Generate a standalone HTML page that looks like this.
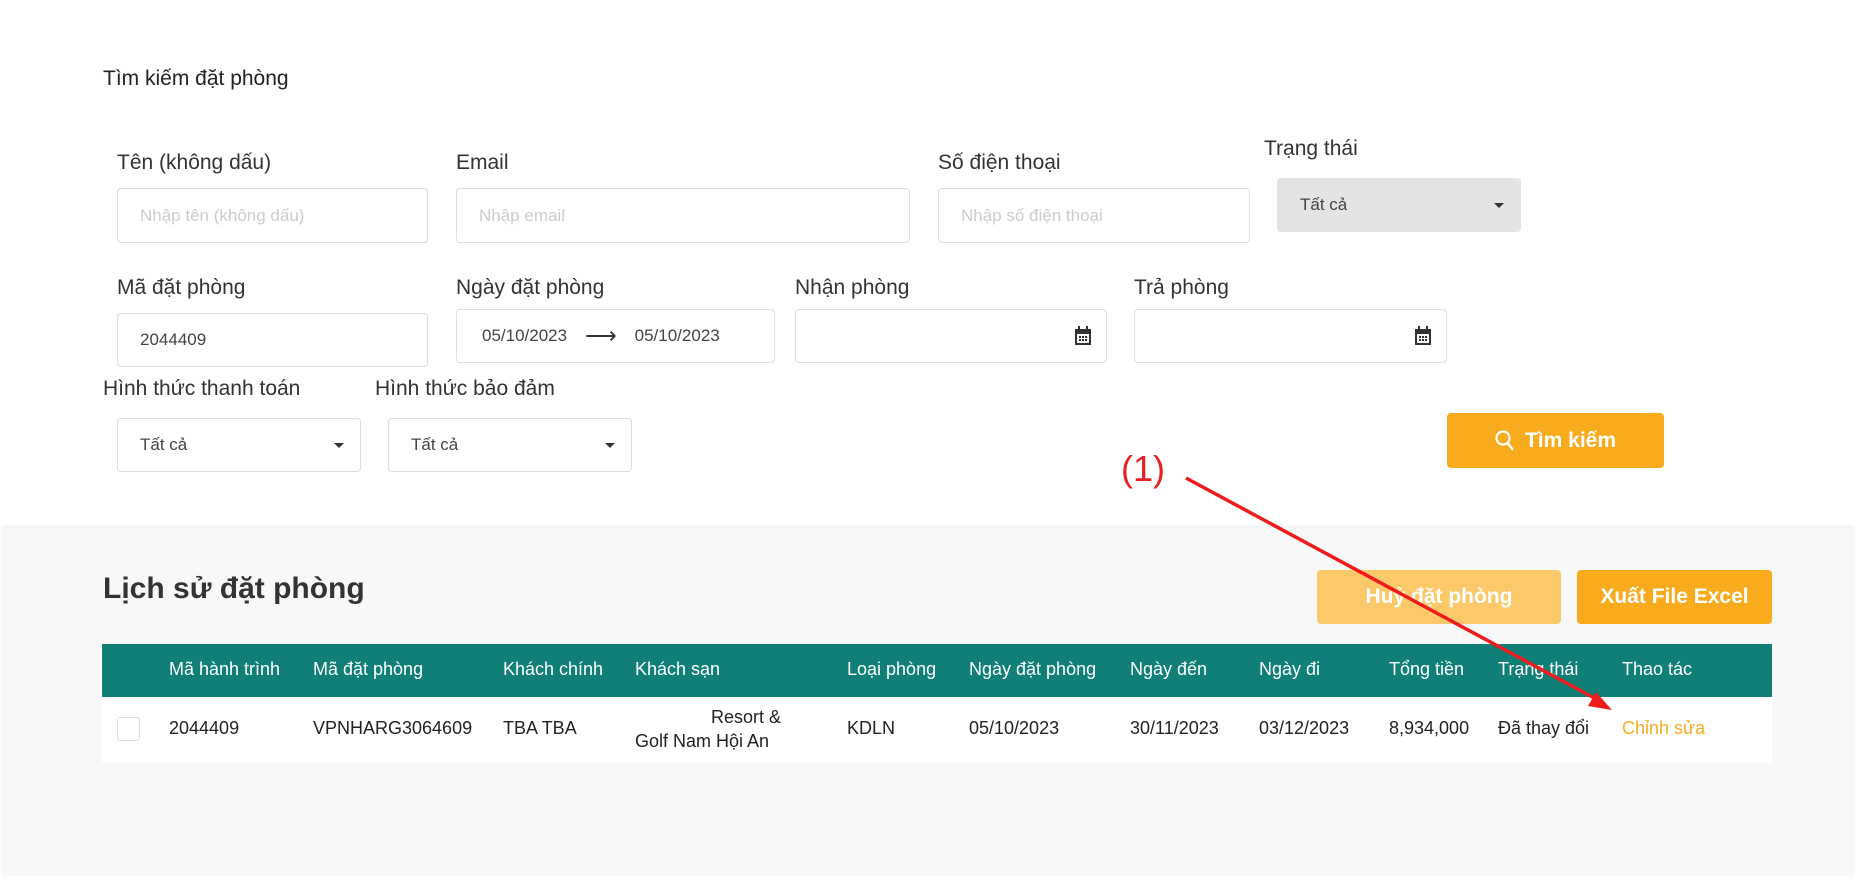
<!DOCTYPE html>
<html><head><meta charset="utf-8"><style>
*{box-sizing:border-box;margin:0;padding:0}
body{width:1856px;height:876px;background:#fff;font-family:"Liberation Sans",sans-serif;color:#333;position:relative;overflow:hidden}
.a{position:absolute;white-space:nowrap}
.lbl{font-size:21px;color:#333}
.inp{position:absolute;border:1px solid #ddd;border-radius:4px;background:#fff;font-size:17px;color:#ccc;padding-left:22px;display:flex;align-items:center}
.sel{color:#444}
.caret{position:absolute;right:16px;top:50%;margin-top:-2px;border-left:5px solid transparent;border-right:5px solid transparent;border-top:5px solid #333}
.bottom{position:absolute;left:2px;right:2px;top:528px;height:348px;background:#f8f8f8;box-shadow:0 -2px 4px rgba(0,0,0,.06)}
.th{font-size:18px;color:#fff;top:659px}
.td{font-size:18px;color:#222;top:718px}
.cal{position:absolute;right:14px;top:50%;margin-top:-10px}
</style></head><body>
<div class="a" style="left:103px;top:67px;font-size:21px;color:#222">Tìm kiếm đặt phòng</div>

<div class="a lbl" style="left:117px;top:151px">Tên (không dấu)</div>
<div class="inp" style="left:117px;top:188px;width:311px;height:55px">Nhập tên (không dấu)</div>
<div class="a lbl" style="left:456px;top:151px">Email</div>
<div class="inp" style="left:456px;top:188px;width:454px;height:55px">Nhập email</div>
<div class="a lbl" style="left:938px;top:151px">Số điện thoại</div>
<div class="inp" style="left:938px;top:188px;width:312px;height:55px">Nhập số điện thoại</div>
<div class="a lbl" style="left:1264px;top:137px">Trạng thái</div>
<div class="inp sel" style="left:1277px;top:178px;width:244px;height:54px;background:#e4e4e4;border-color:#e4e4e4">Tất cả<span class="caret"></span></div>

<div class="a lbl" style="left:117px;top:276px">Mã đặt phòng</div>
<div class="inp sel" style="left:117px;top:313px;width:311px;height:54px">2044409</div>
<div class="a lbl" style="left:456px;top:276px">Ngày đặt phòng</div>
<div class="inp sel" style="left:456px;top:309px;width:319px;height:54px;padding-left:25px">05/10/2023<span style="margin:0 18px;font-size:22px;color:#333">⟶</span>05/10/2023</div>
<div class="a lbl" style="left:795px;top:276px">Nhận phòng</div>
<div class="inp" style="left:795px;top:309px;width:312px;height:54px"><svg class="cal" width="18" height="20" viewBox="0 0 18 20"><rect x="1" y="3" width="16" height="16" fill="#333"/><rect x="3" y="8" width="12" height="9" fill="#fff"/><rect x="4" y="0" width="2" height="5" fill="#333"/><rect x="12" y="0" width="2" height="5" fill="#333"/><g fill="#333"><rect x="5" y="10" width="2" height="2"/><rect x="8" y="10" width="2" height="2"/><rect x="11" y="10" width="2" height="2"/><rect x="5" y="13" width="2" height="2"/><rect x="8" y="13" width="2" height="2"/><rect x="11" y="13" width="2" height="2"/></g></svg></div>
<div class="a lbl" style="left:1134px;top:276px">Trả phòng</div>
<div class="inp" style="left:1134px;top:309px;width:313px;height:54px"><svg class="cal" width="18" height="20" viewBox="0 0 18 20"><rect x="1" y="3" width="16" height="16" fill="#333"/><rect x="3" y="8" width="12" height="9" fill="#fff"/><rect x="4" y="0" width="2" height="5" fill="#333"/><rect x="12" y="0" width="2" height="5" fill="#333"/><g fill="#333"><rect x="5" y="10" width="2" height="2"/><rect x="8" y="10" width="2" height="2"/><rect x="11" y="10" width="2" height="2"/><rect x="5" y="13" width="2" height="2"/><rect x="8" y="13" width="2" height="2"/><rect x="11" y="13" width="2" height="2"/></g></svg></div>

<div class="a lbl" style="left:103px;top:377px">Hình thức thanh toán</div>
<div class="inp sel" style="left:117px;top:418px;width:244px;height:54px">Tất cả<span class="caret"></span></div>
<div class="a lbl" style="left:375px;top:377px">Hình thức bảo đảm</div>
<div class="inp sel" style="left:388px;top:418px;width:244px;height:54px">Tất cả<span class="caret"></span></div>

<div class="a" style="left:1447px;top:413px;width:217px;height:55px;background:#f9ab1e;border-radius:4px;color:#fff;font-size:21px;font-weight:bold;display:flex;align-items:center;justify-content:center"><svg width="20" height="22" viewBox="0 0 20 22" style="margin-right:10px"><circle cx="8" cy="8" r="6.5" fill="none" stroke="#fff" stroke-width="2.2"/><line x1="12.5" y1="13" x2="18" y2="20" stroke="#fff" stroke-width="2.4"/></svg>Tìm kiếm</div>

<div class="bottom"></div>
<div class="a" style="left:103px;top:572px;font-size:30px;font-weight:bold;color:#333">Lịch sử đặt phòng</div>
<div class="a" style="left:1317px;top:570px;width:244px;height:54px;background:#fbc96a;border-radius:4px;color:#fff;font-size:21px;font-weight:bold;display:flex;align-items:center;justify-content:center">Huỷ đặt phòng</div>
<div class="a" style="left:1577px;top:570px;width:195px;height:54px;background:#f9ab1e;border-radius:4px;color:#fff;font-size:21px;font-weight:bold;display:flex;align-items:center;justify-content:center">Xuất File Excel</div>

<div class="a" style="left:102px;top:644px;width:1670px;height:53px;background:#0f7f78"></div>
<div class="a" style="left:102px;top:697px;width:1670px;height:66px;background:#fff"></div>
<div class="a th" style="left:169px">Mã hành trình</div>
<div class="a th" style="left:313px">Mã đặt phòng</div>
<div class="a th" style="left:503px">Khách chính</div>
<div class="a th" style="left:635px">Khách sạn</div>
<div class="a th" style="left:847px">Loại phòng</div>
<div class="a th" style="left:969px">Ngày đặt phòng</div>
<div class="a th" style="left:1130px">Ngày đến</div>
<div class="a th" style="left:1259px">Ngày đi</div>
<div class="a th" style="left:1389px">Tổng tiền</div>
<div class="a th" style="left:1498px">Trạng thái</div>
<div class="a th" style="left:1622px">Thao tác</div>

<div class="a" style="left:117px;top:717px;width:23px;height:24px;border:1px solid #ddd;border-radius:3px;background:#fff"></div>
<div class="a td" style="left:169px">2044409</div>
<div class="a td" style="left:313px">VPNHARG3064609</div>
<div class="a td" style="left:503px">TBA TBA</div>
<div class="a" style="left:635px;top:707px;width:146px;font-size:18px;color:#222;text-align:right">Resort &amp;</div>
<div class="a" style="left:635px;top:731px;font-size:18px;color:#222">Golf Nam Hội An</div>
<div class="a td" style="left:847px">KDLN</div>
<div class="a td" style="left:969px">05/10/2023</div>
<div class="a td" style="left:1130px">30/11/2023</div>
<div class="a td" style="left:1259px">03/12/2023</div>
<div class="a td" style="left:1389px">8,934,000</div>
<div class="a td" style="left:1498px">Đã thay đổi</div>
<div class="a td" style="left:1622px;color:#f9ab1e">Chỉnh sửa</div>

<div class="a" style="left:1121px;top:448px;font-size:36px;color:#e8201f">(1)</div>
<svg class="a" style="left:0;top:0" width="1856" height="876"><line x1="1186" y1="478" x2="1598" y2="700" stroke="#ee1c1c" stroke-width="3.5"/><polygon points="1612,710 1588,706 1596,692" fill="#ee1c1c"/></svg>
</body></html>
